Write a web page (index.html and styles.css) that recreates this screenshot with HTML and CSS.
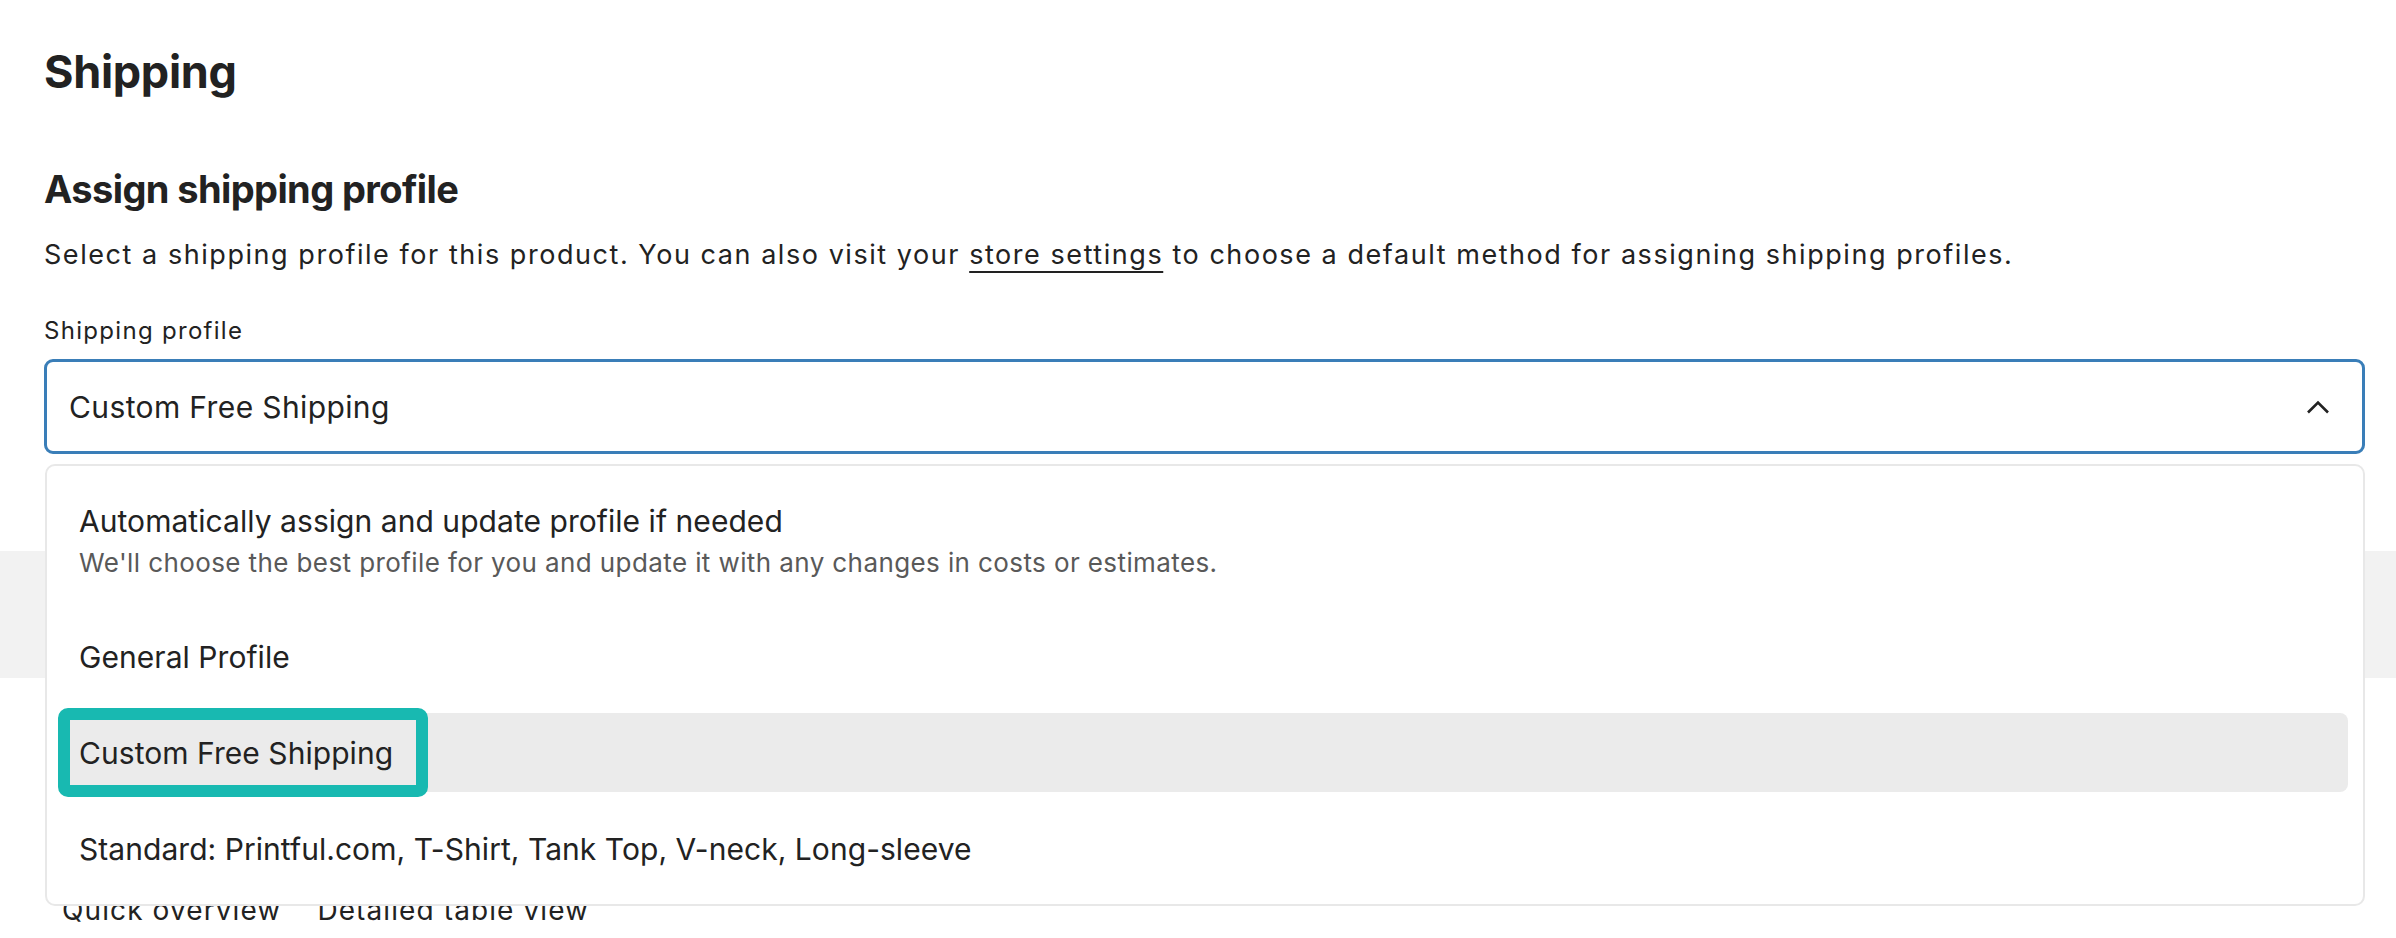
FILE: index.html
```html
<!DOCTYPE html>
<html lang="en">
<head>
    <meta charset="UTF-8">
    <meta name="viewport" content="width=device-width, initial-scale=1.0">
    <title>Shipping</title>
    <link rel="stylesheet" href="styles.css">
</head>
<body>
    <div class="form-section">
        <h1 class="page-title">Shipping</h1>
        <h2 class="section-title">Assign shipping profile</h2>
        <p class="desc">Select a shipping profile for this product. You can also visit your <a href="#" class="link">store settings</a> to choose a default method for assigning shipping profiles.</p>

        <div class="field-label">Shipping profile</div>
        <div class="select-wrap">
            <div class="select">
                <span>Custom Free Shipping</span>
                <svg class="chevron" width="24" height="14" viewBox="0 0 24 14">
                    <polyline points="2,12.5 12,2.5 22,12.5" fill="none" stroke="#222" stroke-width="2.6" />
                </svg>
            </div>

            <div class="menu">
                <div class="option">
                    <div class="option-title">Automatically assign and update profile if needed</div>
                    <div class="option-sub">We'll choose the best profile for you and update it with any changes in costs or estimates.</div>
                </div>
                <div class="option">
                    <div class="option-title">General Profile</div>
                </div>
                <div class="option active">
                    <div class="option-title">Custom Free Shipping</div>
                    <div class="callout"></div>
                </div>
                <div class="option">
                    <div class="option-title">Standard: Printful.com, T-Shirt, Tank Top, V-neck, Long-sleeve</div>
                </div>
            </div>
        </div>
    </div>

    <div class="band"></div>

    <div class="tabs">
        <span class="tab">Quick overview</span>
        <span class="tab">Detailed table view</span>
    </div>
</body>
</html>
```

FILE: styles.css
```css
body { margin: 0; background: #fff; color: #222; font-family: 'Inter', 'Liberation Sans', sans-serif; overflow: hidden; }

.form-section { padding: 0 31px 0 44px; }
.page-title { font-size: 45px; line-height: 54px; font-weight: 700; margin: 45px 0 0; letter-spacing: -0.3px; }
.section-title { font-size: 38px; line-height: 46px; font-weight: 700; margin: 67px 0 0; letter-spacing: -0.6px; }
.desc { font-size: 27px; line-height: 40px; margin: 23px 0 0; letter-spacing: 1.55px; }
.link { color: #222; text-decoration: underline; text-decoration-thickness: 2px; text-underline-offset: 7px; }

.field-label { font-size: 24px; line-height: 32px; margin-top: 40px; letter-spacing: 1.3px; }

.select-wrap { position: relative; margin-top: 12px; }
.select { height: 89px; border: 3px solid #3a7eb8; border-radius: 9px; display: flex; align-items: center; justify-content: space-between; padding: 0 32px 0 22px; font-size: 30px; line-height: 36px; letter-spacing: 0.38px; }
.chevron { display: block; }

/* dropdown list sits over the content below */
.menu { position: absolute; top: calc(100% + 10px); left: 1px; right: 0; z-index: 2; background: #fff; border: 2px solid #e8e8e8; border-radius: 10px; padding: 15px 15px 16px; display: flex; flex-direction: column; gap: 17px; }
.option { position: relative; padding: 21.5px 17px; border-radius: 8px; }
.option-title { font-size: 30px; line-height: 36px; letter-spacing: 0.05px; }
.option-sub { font-size: 26px; line-height: 32px; color: #595959; margin-top: 8px; letter-spacing: 0.4px; }
.option.active { background: #ebebeb; }

.callout { position: absolute; left: -4px; top: -5px; width: 346px; height: 65px; border: 12px solid #18b9b1; border-radius: 10px; }

.band { background: #f2f2f2; height: 127px; margin-top: 97px; }

.tabs { display: flex; gap: 36px; padding-left: 62px; margin-top: 214px; font-size: 28px; line-height: 36px; letter-spacing: 1.1px; }
```
